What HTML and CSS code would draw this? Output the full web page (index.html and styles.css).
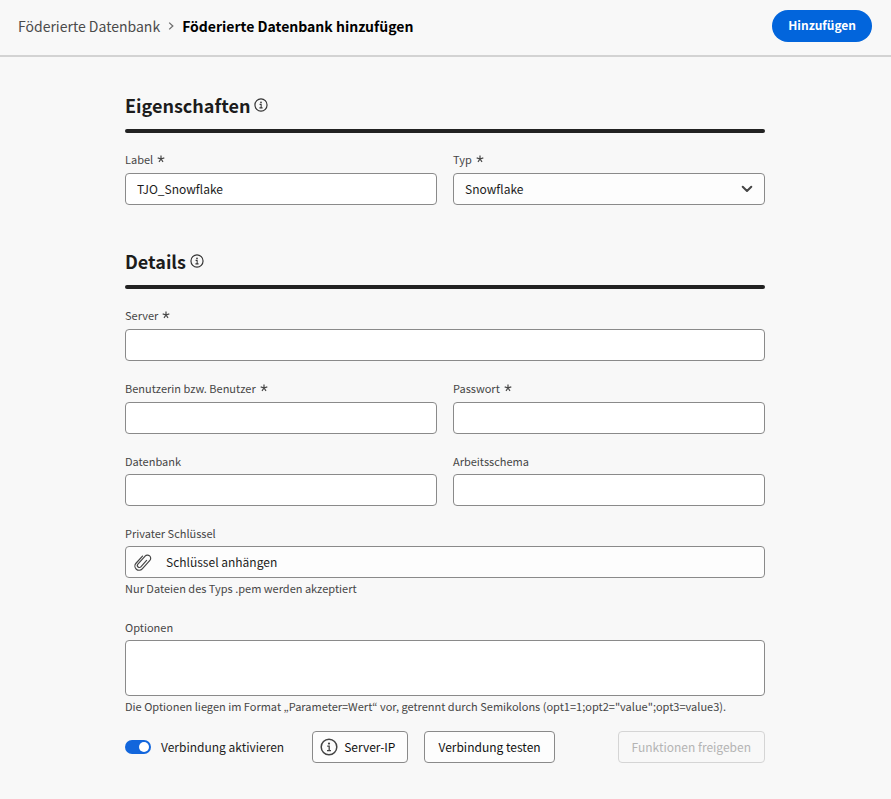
FILE: index.html
```html
<!DOCTYPE html>
<html lang="de">
<head>
<meta charset="utf-8">
<title>Föderierte Datenbank hinzufügen</title>
<link rel="stylesheet" href="styles.css">
</head>
<body>
<svg class="sprite" aria-hidden="true">
  <symbol id="info" viewBox="0 0 18 18">
    <circle cx="9" cy="9" r="7.8" fill="none" stroke="currentColor" stroke-width="1.5"/>
    <circle cx="9" cy="5.6" r="1.1" fill="currentColor"/>
    <path d="M7.2 8.2h2v4.2M7 12.7h4" fill="none" stroke="currentColor" stroke-width="1.3"/>
  </symbol>
  <symbol id="star" viewBox="0 0 8 8">
    <path d="M4 4V.6M4 4L7.3 2.9M4 4l2 2.9M4 4L2 6.9M4 4L.7 2.9" fill="none" stroke="currentColor" stroke-width="1.2"/>
  </symbol>
</svg>
<header class="topbar">
  <nav class="crumbs" aria-label="Brotkrumen">
    <a href="#">Föderierte Datenbank</a>
    <svg class="crumb-arrow" viewBox="0 0 6 8" aria-hidden="true"><path d="M1.2.6L4.8 4 1.2 7.4" fill="none" stroke="currentColor" stroke-width="1.3"/></svg>
    <span class="current">Föderierte Datenbank hinzufügen</span>
  </nav>
  <button class="primary" type="button">Hinzufügen</button>
</header>
<main class="page">
  <form class="form">
    <section>
      <h2>Eigenschaften <svg class="info-small" aria-hidden="true"><use href="#info"/></svg></h2>
      <div class="fields">
        <div class="field">
          <label class="required" for="label">Label <svg class="star" aria-hidden="true"><use href="#star"/></svg></label>
          <input class="box" id="label" type="text" value="TJO_Snowflake">
        </div>
        <div class="field">
          <label class="required" for="type">Typ <svg class="star" aria-hidden="true"><use href="#star"/></svg></label>
          <div class="select">
            <select class="box" id="type"><option>Snowflake</option></select>
            <svg class="chevron" viewBox="0 0 12 8" aria-hidden="true"><path d="M1.7 1.7L6 6l4.3-4.3" fill="none" stroke="currentColor" stroke-width="2" stroke-linecap="round" stroke-linejoin="round"/></svg>
          </div>
        </div>
      </div>
    </section>
    <section>
      <h2>Details <svg class="info-small" aria-hidden="true"><use href="#info"/></svg></h2>
      <div class="fields">
        <div class="field wide">
          <label class="required" for="server">Server <svg class="star" aria-hidden="true"><use href="#star"/></svg></label>
          <input class="box" id="server" type="text">
        </div>
        <div class="field">
          <label class="required" for="user">Benutzerin bzw. Benutzer <svg class="star" aria-hidden="true"><use href="#star"/></svg></label>
          <input class="box" id="user" type="text">
        </div>
        <div class="field">
          <label class="required" for="password">Passwort <svg class="star" aria-hidden="true"><use href="#star"/></svg></label>
          <input class="box" id="password" type="password">
        </div>
        <div class="field">
          <label for="database">Datenbank</label>
          <input class="box" id="database" type="text">
        </div>
        <div class="field">
          <label for="schema">Arbeitsschema</label>
          <input class="box" id="schema" type="text">
        </div>
        <div class="field wide">
          <label for="key">Privater Schlüssel</label>
          <button class="box attach" id="key" type="button">
            <svg class="clip" viewBox="0 0 18 20" aria-hidden="true"><path transform="translate(8.6 10.2) rotate(42)" d="M-4.2-4.5V5.2a4.2 4.2 0 0 0 8.4 0V-6.2a3.2 3.2 0 0 0-6.4 0V4.6a2 2 0 0 0 4 0V-4" fill="none" stroke="currentColor" stroke-width="1.2" stroke-linecap="round"/></svg>
            Schlüssel anhängen
          </button>
          <p class="help">Nur Dateien des Typs .pem werden akzeptiert</p>
        </div>
        <div class="field wide">
          <label for="options">Optionen</label>
          <textarea class="box" id="options"></textarea>
          <p class="help">Die Optionen liegen im Format „Parameter=Wert“ vor, getrennt durch Semikolons (opt1=1;opt2="value";opt3=value3).</p>
        </div>
      </div>
    </section>
    <div class="actions">
      <label class="toggle"><input type="checkbox" role="switch" checked>Verbindung aktivieren</label>
      <button class="outline with-icon" type="button"><svg class="info-large" aria-hidden="true"><use href="#info"/></svg>Server-IP</button>
      <button class="outline" type="button">Verbindung testen</button>
      <button class="outline last" type="button" disabled>Funktionen freigeben</button>
    </div>
  </form>
</main>
</body>
</html>
```
FILE: styles.css
```css
* { box-sizing: border-box; }

body {
  margin: 0;
  min-height: 100vh;
  background: #f8f8f8;
  color: #1c1c1c;
  font-family: "Noto Sans CJK JP", "Noto Sans", sans-serif;
  font-size: 12px;
  line-height: 20px;
}

button, input, select, textarea { font: inherit; color: inherit; }
svg { flex: none; }
.sprite { display: none; }

.topbar {
  display: flex;
  align-items: center;
  justify-content: space-between;
  height: 57px;
  padding: 0 19px 4px 18px;
  border-bottom: 2px solid #d3d3d3;
}

.crumbs {
  display: flex;
  align-items: center;
  gap: 8px;
  font-size: 14px;
  white-space: nowrap;
}
.crumbs a { color: #4b4b4b; text-decoration: none; }
.crumb-arrow { width: 6px; height: 8px; color: #6e6e6e; }
.current { color: #000; font-weight: 700; }

.primary {
  height: 32px;
  padding: 0 16px 2px;
  border: 0;
  border-radius: 16px;
  background: #0265dc;
  color: #fff;
  font-weight: 700;
}

.page { padding: 32px 17px 32px 16px; }
.form { max-width: 640px; margin: 0 auto; }

h2 {
  display: flex;
  align-items: center;
  gap: 4px;
  height: 44px;
  margin: 0 0 15px;
  padding-bottom: 12px;
  font-size: 18px;
  font-weight: 700;
  line-height: 32px;
  position: relative;
}
h2::after {
  content: "";
  position: absolute;
  inset: auto 0 0;
  height: 4px;
  border-radius: 2px;
  background: #222;
}
.info-small { width: 14px; height: 14px; color: #333; }
.info-large { width: 18px; height: 18px; color: #444; }

section + section { margin-top: 40px; }

.fields {
  display: grid;
  grid-template-columns: 1fr 1fr;
  gap: 16px;
}
.wide { grid-column: 1 / -1; }
.wide + .wide { margin-top: 2px; }

.field label {
  display: flex;
  align-items: center;
  gap: 4px;
  height: 24px;
  padding-bottom: 3px;
  font-size: 11px;
  color: #464646;
}
.field .required { height: 25px; }
.star { width: 8px; height: 8px; }

.box {
  display: block;
  width: 100%;
  height: 32px;
  padding: 0 11px 2px;
  border: 1px solid #8a8a8a;
  border-radius: 4px;
  background: #fff;
}
textarea.box { height: 56px; resize: none; }

.select { position: relative; }
select.box { appearance: none; padding-bottom: 0; background: #fdfdfd; }
.chevron {
  position: absolute;
  right: 12px;
  top: 12px;
  width: 12px;
  height: 8px;
  color: #464646;
  pointer-events: none;
}

.box.attach {
  display: flex;
  align-items: center;
  gap: 14px;
  padding: 0 8px;
  background: #fdfdfd;
}
.clip { width: 18px; height: 20px; color: #464646; }

.help {
  margin: 0;
  font-size: 11px;
  line-height: 20px;
  color: #464646;
}

.actions {
  display: flex;
  align-items: center;
  gap: 16px;
  margin-top: 15px;
  white-space: nowrap;
}
.toggle {
  display: flex;
  align-items: center;
  gap: 10px;
  margin-right: 12px;
}
.toggle input {
  appearance: none;
  width: 26px;
  height: 14px;
  margin: 0;
  padding: 2px;
  border-radius: 7px;
  background: #1266dc;
}
.toggle input::before {
  content: "";
  display: block;
  width: 10px;
  height: 10px;
  margin-left: auto;
  border-radius: 50%;
  background: #fff;
}
.outline {
  display: flex;
  align-items: center;
  gap: 6px;
  height: 32px;
  padding: 0 13px;
  border: 1px solid #8a8a8a;
  border-radius: 4px;
  background: #fdfdfd;
  color: #111;
}
.with-icon { padding: 0 12px 0 7px; }
.last { margin-left: auto; }
.outline:disabled {
  border-color: #d5d5d5;
  background: transparent;
  color: #b4b4b4;
}
```
